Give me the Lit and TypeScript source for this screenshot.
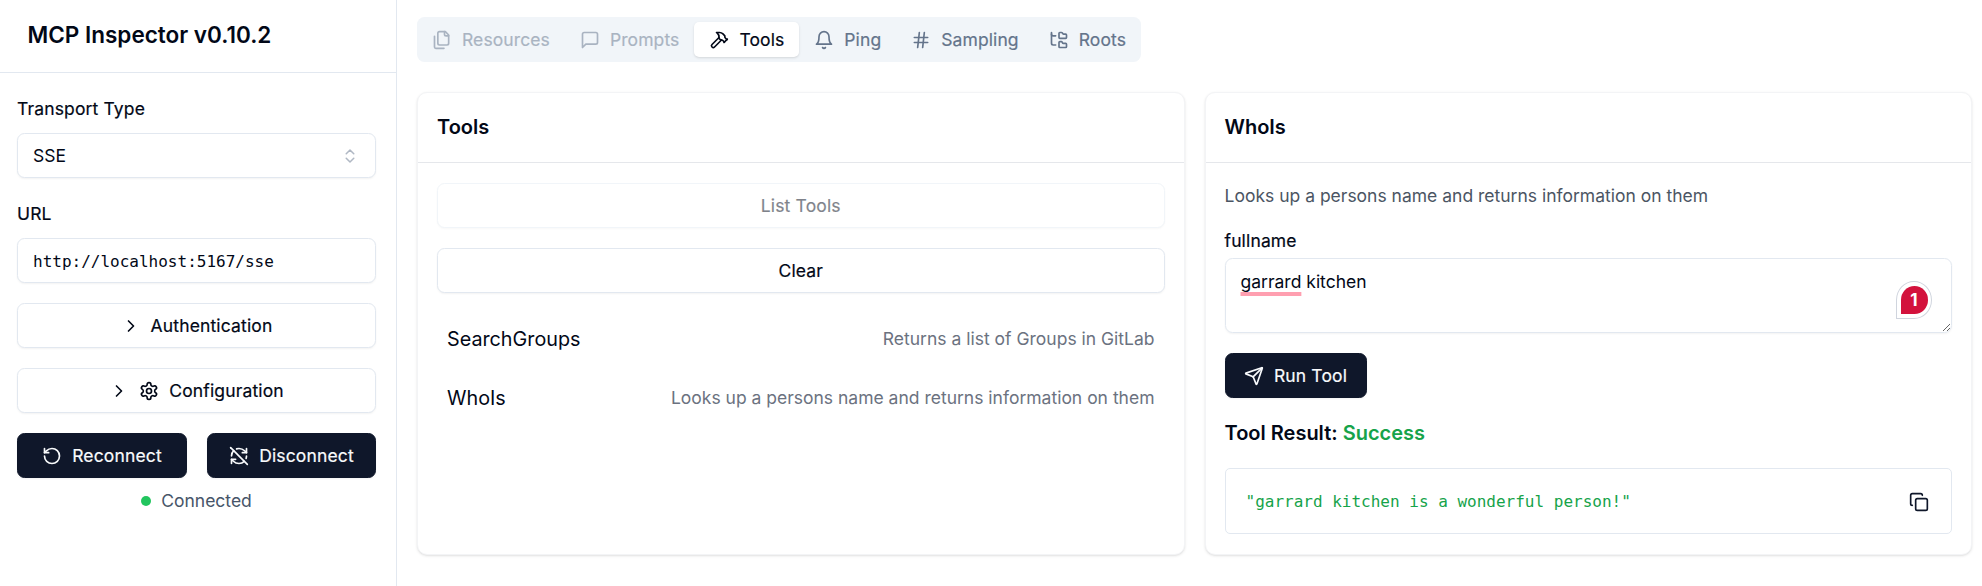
import { LitElement, html, css, svg } from "lit";
import { customElement } from "lit/decorators.js";

const ICONS: Record<string, unknown> = {
  files: svg`<path d="M20 7h-3a2 2 0 0 1-2-2V2"/><path d="M9 18a2 2 0 0 1-2-2V4a2 2 0 0 1 2-2h7l4 4v10a2 2 0 0 1-2 2Z"/><path d="M3 7.6v12.8A1.6 1.6 0 0 0 4.6 22h9.8"/>`,
  message: svg`<path d="M21 15a2 2 0 0 1-2 2H7l-4 4V5a2 2 0 0 1 2-2h14a2 2 0 0 1 2 2z"/>`,
  hammer: svg`<path d="m15 12-8.373 8.373a1 1 0 1 1-3-3L12 9"/><path d="m18 15 4-4"/><path d="m21.5 11.5-1.914-1.914A2 2 0 0 1 19 8.172V7l-2.26-2.26a6 6 0 0 0-4.202-1.756L9 2.96l.92.82A6.18 6.18 0 0 1 12 8.4V10l2 2h1.172a2 2 0 0 1 1.414.586L18.5 14.5"/>`,
  bell: svg`<path d="M6 8a6 6 0 0 1 12 0c0 7 3 9 3 9H3s3-2 3-9"/><path d="M10.3 21a1.94 1.94 0 0 0 3.4 0"/>`,
  hash: svg`<line x1="4" x2="20" y1="9" y2="9"/><line x1="4" x2="20" y1="15" y2="15"/><line x1="10" x2="8" y1="3" y2="21"/><line x1="16" x2="14" y1="3" y2="21"/>`,
  tree: svg`<path d="M20 10a1 1 0 0 0 1-1V6a1 1 0 0 0-1-1h-2.5a1 1 0 0 1-.8-.4l-.9-1.2A1 1 0 0 0 15 3h-2a1 1 0 0 0-1 1v5a1 1 0 0 0 1 1Z"/><path d="M20 21a1 1 0 0 0 1-1v-3a1 1 0 0 0-1-1h-2.9a1 1 0 0 1-.88-.55l-.42-.85a1 1 0 0 0-.92-.6H13a1 1 0 0 0-1 1v5a1 1 0 0 0 1 1Z"/><path d="M3 5a2 2 0 0 0 2 2h3"/><path d="M3 3v13a2 2 0 0 0 2 2h3"/>`,
  chevron: svg`<path d="m9 18 6-6-6-6"/>`,
  updown: svg`<path d="m7 15 5 5 5-5"/><path d="m7 9 5-5 5 5"/>`,
  gear: svg`<path d="M12.22 2h-.44a2 2 0 0 0-2 2v.18a2 2 0 0 1-1 1.73l-.43.25a2 2 0 0 1-2 0l-.15-.08a2 2 0 0 0-2.73.73l-.22.38a2 2 0 0 0 .73 2.73l.15.1a2 2 0 0 1 1 1.72v.51a2 2 0 0 1-1 1.74l-.15.09a2 2 0 0 0-.73 2.73l.22.38a2 2 0 0 0 2.73.73l.15-.08a2 2 0 0 1 2 0l.43.25a2 2 0 0 1 1 1.73V20a2 2 0 0 0 2 2h.44a2 2 0 0 0 2-2v-.18a2 2 0 0 1 1-1.73l.43-.25a2 2 0 0 1 2 0l.15.08a2 2 0 0 0 2.73-.73l.22-.39a2 2 0 0 0-.73-2.73l-.15-.08a2 2 0 0 1-1-1.74v-.5a2 2 0 0 1 1-1.74l.15-.09a2 2 0 0 0 .73-2.73l-.22-.38a2 2 0 0 0-2.73-.73l-.15.08a2 2 0 0 1-2 0l-.43-.25a2 2 0 0 1-1-1.73V4a2 2 0 0 0-2-2z"/><circle cx="12" cy="12" r="3"/>`,
  rotate: svg`<path d="M3 12a9 9 0 1 0 9-9 9.75 9.75 0 0 0-6.74 2.74L3 8"/><path d="M3 3v5h5"/>`,
  refreshOff: svg`<path d="M21 8L18.74 5.74A9.75 9.75 0 0 0 12 3C11 3 10.03 3.16 9.13 3.47"/><path d="M8 16H3v5"/><path d="M3 12C3 9.51 4 7.26 5.64 5.64"/><path d="m3 16 2.26 2.26A9.75 9.75 0 0 0 12 21c2.49 0 4.74-1 6.36-2.64"/><path d="M21 12c0 1-.16 1.97-.47 2.87"/><path d="M21 3v5h-5"/><path d="M22 22 2 2"/>`,
  send: svg`<path d="M14.536 21.686a.5.5 0 0 0 .937-.024l6.5-19a.496.496 0 0 0-.635-.635l-19 6.5a.5.5 0 0 0-.024.937l7.93 3.18a2 2 0 0 1 1.112 1.11z"/><path d="m21.854 2.147-10.94 10.939"/>`,
  copy: svg`<rect width="14" height="14" x="8" y="8" rx="2" ry="2"/><path d="M4 16c-1.1 0-2-.9-2-2V4c0-1.1.9-2 2-2h10c1.1 0 2 .9 2 2"/>`,
};

const icon = (name: string) => html`<svg class="icon" viewBox="0 0 24 24" fill="none" stroke="currentColor" stroke-width="2" stroke-linecap="round" stroke-linejoin="round">${ICONS[name]}</svg>`;

const TABS = [
  { label: "Resources", icon: "files", state: "off" },
  { label: "Prompts", icon: "message", state: "off" },
  { label: "Tools", icon: "hammer", state: "on" },
  { label: "Ping", icon: "bell", state: "" },
  { label: "Sampling", icon: "hash", state: "" },
  { label: "Roots", icon: "tree", state: "" },
];

@customElement("app-root")
export class AppRoot extends LitElement {
  static styles = css`
    :host { display: block; font-family: Inter, "Liberation Sans", sans-serif; color: #020817; background: #fff; font-size: 17.5px; line-height: 22px; }
    * { box-sizing: border-box; }
    .icon { width: 20px; height: 20px; flex: none; display: block; }
    .page { display: flex; height: 586px; overflow: hidden; }
    .side { width: 397px; flex: none; border-right: 1px solid #e2e8f0; }
    .side-head { height: 73px; border-bottom: 1px solid #e2e8f0; padding-left: 27.5px; display: flex; align-items: center; font-size: 22.5px; font-weight: 600; padding-bottom: 3px; }
    .side-body { padding: 25px 20px 0 17px; display: flex; flex-direction: column; }
    .label { font-weight: 400; letter-spacing: .15px; -webkit-text-stroke: .2px currentColor; height: 22px; margin-bottom: 13px; }
    .field { height: 45px; border: 1px solid #e2e8f0; border-radius: 7.5px; display: flex; align-items: center; justify-content: space-between; padding: 0 15px; background: #fff; box-shadow: 0 1px 2px rgba(0,0,0,.05); }
    .field.sel { margin-bottom: 25px; }
    .field .icon { width: 18px; height: 18px; opacity: .5; margin-right: 1px; color: #64748b; }
    .field.mono { padding-top: 2px; }
    .mono { font-family: "DejaVu Sans Mono", "Liberation Mono", monospace; font-size: 16px; }
    .btn { height: 45px; border-radius: 7.5px; display: flex; align-items: center; justify-content: center; font-weight: 400; letter-spacing: .15px; -webkit-text-stroke: .2px currentColor; background: #fff; border: 1px solid #e2e8f0; box-shadow: 0 1px 2px rgba(0,0,0,.05); }
    .btn.dark { background: #0f172a; border-color: #0f172a; color: #f8fafc; }
    .gap10 { gap: 10px; }
    .mt20 { margin-top: 20px; }
    .pair { display: grid; grid-template-columns: 170px 169px; column-gap: 20px; margin-top: 20px; }
    .status { margin-top: 12px; display: flex; justify-content: center; align-items: center; gap: 10px; color: #475569; }
    .dot { width: 10px; height: 10px; border-radius: 50%; background: #22c55e; }
    .main { flex: 1; min-width: 0; padding: 17px 10px 0 20px; display: flex; flex-direction: column; }
    .tabs { align-self: flex-start; display: flex; align-items: center; height: 45px; background: #f1f5f9; border-radius: 7.5px; color: #64748b; font-weight: 400; letter-spacing: .1px; -webkit-text-stroke: .2px currentColor; margin-bottom: 30px; }
    .tab { height: 35px; padding: 0 15px; display: flex; align-items: center; gap: 10px; border-radius: 5px; white-space: nowrap; }
    .tab.off { opacity: .5; }
    .tab.on { background: #fff; color: #020817; box-shadow: 0 1px 3px rgba(0,0,0,.1), 0 1px 2px -1px rgba(0,0,0,.1); }
    .cards { display: grid; grid-template-columns: 1fr 1fr; column-gap: 20px; }
    .card { height: 463px; border: 1px solid #f3f4f6; border-radius: 10px; background: #fff; box-shadow: 0 1px 3px rgba(0,0,0,.1), 0 1px 2px -1px rgba(0,0,0,.1); }
    .card-head { height: 70px; border-bottom: 1px solid #e5e7eb; padding: 0 0 2px 19px; display: flex; align-items: center; font-size: 20px; font-weight: 600; }
    .card-body { padding: 20px 19px; display: flex; flex-direction: column; }
    .muted-btn { color: #020817; }
    .muted-btn span { opacity: .5; }
    .muted-btn.btn { border-color: #f1f5f9; box-shadow: 0 1px 2px rgba(0,0,0,.03); }
    .rows { margin-top: 21px; display: flex; flex-direction: column; gap: 9px; }
    .row { height: 50px; padding: 0 10px; display: flex; align-items: center; justify-content: space-between; }
    .row-name { font-size: 19.75px; font-weight: 400; }
    .row-desc { color: #6b7280; }
    .desc { color: #4b5563; margin-top: 2px; height: 22px; }
    .fname { font-weight: 400; letter-spacing: .15px; -webkit-text-stroke: .2px currentColor; margin-top: 23px; height: 22px; margin-bottom: 6px; }
    .area { position: relative; height: 75px; border: 1px solid #e2e8f0; border-radius: 7.5px; padding: 12px 15px; resize: vertical; overflow: hidden; box-shadow: 0 1px 2px rgba(0,0,0,.05); }
    .spell { text-decoration: underline #ff9fb0 4px; text-underline-offset: 4px; text-decoration-skip-ink: none; }
    .badge { position: absolute; right: 19px; top: 22px; width: 36px; height: 38px; background: #fff; border: 1px solid #d0d5de; border-radius: 50% 50% 50% 0; display: flex; align-items: center; justify-content: center; }
    .badge span { width: 27px; height: 28px; border-radius: 50% 50% 50% 0; background: #d3123c; color: #fff; font-size: 17px; font-weight: 700; display: flex; align-items: center; justify-content: center; }
    .run { align-self: flex-start; width: 142px; margin-top: 20px; }
    .result-title { font-size: 20px; font-weight: 600; margin-top: 23px; line-height: 25px; }
    .ok { color: #16a34a; }
    .result { margin-top: 22px; height: 66px; border: 1px solid #e2e8f0; border-radius: 5px; display: flex; align-items: center; justify-content: space-between; padding: 2px 22px 0 20px; color: #16a34a; }
    .result .icon { color: #0f172a; }
  `;

  render() {
    return html`<div class="page">
      <aside class="side">
        <div class="side-head">MCP Inspector v0.10.2</div>
        <div class="side-body">
          <div class="label">Transport Type</div>
          <div class="field sel"><span>SSE</span>${icon("updown")}</div>
          <div class="label">URL</div>
          <div class="field mono">http://localhost:5167/sse</div>
          <div class="btn gap10 mt20">${icon("chevron")}<span>Authentication</span></div>
          <div class="btn gap10 mt20">${icon("chevron")}${icon("gear")}<span>Configuration</span></div>
          <div class="pair">
            <div class="btn dark gap10">${icon("rotate")}<span>Reconnect</span></div>
            <div class="btn dark gap10">${icon("refreshOff")}<span>Disconnect</span></div>
          </div>
          <div class="status"><span class="dot"></span><span>Connected</span></div>
        </div>
      </aside>
      <main class="main">
        <nav class="tabs">
          ${TABS.map((t) => html`<div class="tab ${t.state}">${icon(t.icon)}<span>${t.label}</span></div>`)}
        </nav>
        <div class="cards">
          <section class="card">
            <div class="card-head">Tools</div>
            <div class="card-body">
              <div class="btn muted-btn"><span>List Tools</span></div>
              <div class="btn mt20">Clear</div>
              <div class="rows">
                <div class="row"><span class="row-name">SearchGroups</span><span class="row-desc">Returns a list of Groups in GitLab</span></div>
                <div class="row"><span class="row-name">WhoIs</span><span class="row-desc">Looks up a persons name and returns information on them</span></div>
              </div>
            </div>
          </section>
          <section class="card">
            <div class="card-head">WhoIs</div>
            <div class="card-body">
              <div class="desc">Looks up a persons name and returns information on them</div>
              <div class="fname">fullname</div>
              <div class="area"><span class="spell">garrard</span> kitchen<div class="badge"><span>1</span></div></div>
              <div class="btn dark gap10 run">${icon("send")}<span>Run Tool</span></div>
              <div class="result-title">Tool Result: <span class="ok">Success</span></div>
              <div class="result"><span class="mono">"garrard kitchen is a wonderful person!"</span>${icon("copy")}</div>
            </div>
          </section>
        </div>
      </main>
    </div>`;
  }
}
